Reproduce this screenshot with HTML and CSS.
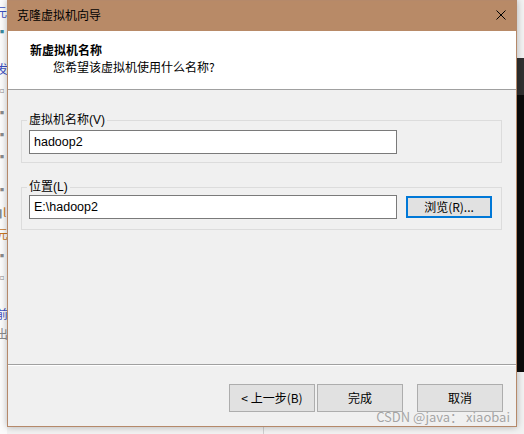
FILE: index.html
```html
<!DOCTYPE html>
<html lang="zh-CN">
<head>
<meta charset="utf-8">
<title>克隆虚拟机向导</title>
<link rel="stylesheet" href="styles.css">
</head>
<body>
<div class="desk">
  <div class="bg-left">
    <div class="bg-block b1">
      <div class="bl blue first">元</div>
      <div class="bl teal">▪组</div>
    </div>
    <div class="bg-block b2">
      <div class="bl blue">发布</div>
      <div class="bl"><span class="gray">▫</span><span class="orange">阳</span></div>
      <div class="bl"><span class="gray">▪</span><span class="orange">体</span></div>
      <div class="bl"><span class="gray">▪</span><span class="orange">砖</span></div>
      <div class="bl"><span class="gray">▪</span><span class="orange">c</span></div>
    </div>
    <div class="bg-block b3">
      <div class="bl"><span class="gray">▪</span><span class="orange">阳</span></div>
      <div class="bl"><span class="gray">▮</span><span class="orange">l</span></div>
      <div class="bl orange">元</div>
      <div class="bl"><span class="gray">▪</span><span class="orange">封</span></div>
      <div class="bl"><span class="gray">▫</span><span class="orange">男</span></div>
    </div>
    <div class="bg-block b4">
      <div class="bl blue">前</div>
      <div class="bl gray">出</div>
    </div>
  </div>
  <div class="bg-right"></div>
  <div class="bg-bottom-line"></div>

  <div class="dialog">
    <div class="titlebar">
      <span class="title">克隆虚拟机向导</span>
      <svg class="close" width="10" height="10" viewBox="0 0 10 10">
        <path d="M0.5 0.5 L9.5 9.5 M9.5 0.5 L0.5 9.5" stroke="#000" stroke-width="1" fill="none"/>
      </svg>
    </div>
    <div class="header">
      <div class="h-title">新虚拟机名称</div>
      <div class="h-sub">您希望该虚拟机使用什么名称?</div>
    </div>
    <div class="body">
      <fieldset class="group g1">
        <legend>虚拟机名称(V)</legend>
        <div class="input">hadoop2</div>
      </fieldset>
      <fieldset class="group g2">
        <legend>位置(L)</legend>
        <div class="row">
          <div class="input">E:\hadoop2</div>
          <button class="btn browse">浏览(R)...</button>
        </div>
      </fieldset>
    </div>
    <div class="footer">
      <button class="btn wide">&lt; 上一步(B)</button>
      <button class="btn wide">完成</button>
      <button class="btn wide cancel">取消</button>
    </div>
  </div>

  <div class="watermark">CSDN @java： xiaobai</div>
</div>
</body>
</html>
```

FILE: styles.css
```css
* { box-sizing: border-box; }

html, body {
  margin: 0;
  padding: 0;
  background: #f0f0f0;
}

body {
  font-family: "Liberation Sans", "Noto Sans CJK SC", sans-serif;
  font-size: 12px;
  color: #000;
}

.desk {
  position: relative;
  width: 524px;
  height: 434px;
  overflow: hidden;
  background: #f2f2f2;
}

/* background windows */
.bg-left {
  position: absolute;
  left: 0;
  top: 0;
  width: 7px;
  height: 434px;
  overflow: hidden;
  background: #fbfbfb;
  font-family: "Noto Sans CJK SC", sans-serif;
  font-size: 12px;
}
.bg-block { margin-left: -4px; white-space: nowrap; }
.bl { height: 20px; line-height: 20px; }
.bl.first { margin-left: -1px; }
.b1 { padding-top: 2px; }
.b1 .bl { height: 20px; }
.b2 { margin-top: 16px; }
.b2 .bl, .b3 .bl { height: 22px; line-height: 22px; }
.b3 { margin-top: 11px; }
.b4 { margin-top: 15px; }
.blue { color: #3c4fc0; }
.teal { color: #3a8aa0; }
.orange { color: #c9771f; }
.gray { color: #8a8a8a; }

.bg-right {
  position: absolute;
  left: 516px;
  top: 58px;
  width: 8px;
  height: 314px;
  background: linear-gradient(#303030 0, #303030 37px, #0b0b0b 37px);
}

.bg-bottom-line {
  position: absolute;
  left: 263px;
  top: 427px;
  width: 1px;
  height: 7px;
  background: #cfcfcf;
}

/* dialog */
.dialog {
  position: absolute;
  left: 7px;
  top: 0;
  width: 510px;
  height: 427px;
  border: 1px solid #b5896a;
  background: #f0f0f0;
  display: flex;
  flex-direction: column;
  box-shadow: 0 0 7px rgba(0, 0, 0, 0.28);
  font-family: "Liberation Sans", "Noto Sans CJK SC", sans-serif;
}

.titlebar {
  height: 30px;
  flex: none;
  background: #b88a67;
  display: flex;
  align-items: center;
  justify-content: space-between;
  padding: 0 10px 2px 9px;
}
.title {
  font-family: "Noto Sans CJK SC", sans-serif;
  font-size: 12px;
  line-height: 16px;
}
.close { display: block; }

.header {
  height: 59px;
  flex: none;
  background: #fff;
  border-bottom: 1px solid #a0a0a0;
  padding: 11px 0 0 22px;
  font-family: "Noto Sans CJK SC", sans-serif;
}
.h-title {
  font-weight: bold;
  font-size: 12px;
  line-height: 16px;
}
.h-sub {
  margin-top: 1px;
  padding-left: 23px;
  font-size: 12px;
  line-height: 16px;
}

.body {
  flex: 1;
  display: flex;
  flex-direction: column;
}

.group {
  min-width: 0;
  margin: 0 14px 0 13px;
  border: 1px solid #dcdcdc;
}
.group legend {
  padding: 0 2px;
  margin-left: -2px;
  font-size: 12px;
  line-height: 16px;
  font-family: "Liberation Sans", "Noto Sans CJK SC", sans-serif;
}
.g1 {
  margin-top: 22px;
  padding: 2px 7px 8px 7px;
}
.g2 {
  margin-top: 16px;
  padding: 0 7px 10px 7px;
}

.input {
  width: 368px;
  height: 24px;
  border: 1px solid #7a7a7a;
  background: #fff;
  padding-left: 4px;
  font-size: 12.5px;
  line-height: 22px;
}

.row {
  display: flex;
  align-items: center;
  gap: 9px;
}

.btn {
  margin: 0;
  border: 1px solid #adadad;
  background: #e1e1e1;
  font-family: "Noto Sans CJK SC", sans-serif;
  font-size: 12px;
  line-height: 16px;
  color: #000;
  padding: 0;
}
.browse {
  width: 86px;
  height: 22px;
  border: 2px solid #0078d7;
}

.footer {
  height: 62px;
  flex: none;
  border-top: 1px solid #a0a0a0;
  box-shadow: inset 0 1px 0 #fff;
  display: flex;
  justify-content: flex-end;
  align-items: flex-start;
  padding: 19px 13px 0 0;
  gap: 2px;
}
.wide {
  width: 86px;
  height: 28px;
}
.cancel { margin-left: 12px; }

.watermark {
  position: absolute;
  right: 14px;
  top: 409px;
  font-family: "Noto Sans CJK SC", sans-serif;
  font-size: 13px;
  line-height: 16px;
  color: rgba(150, 150, 150, 0.85);
  white-space: nowrap;
}
```
